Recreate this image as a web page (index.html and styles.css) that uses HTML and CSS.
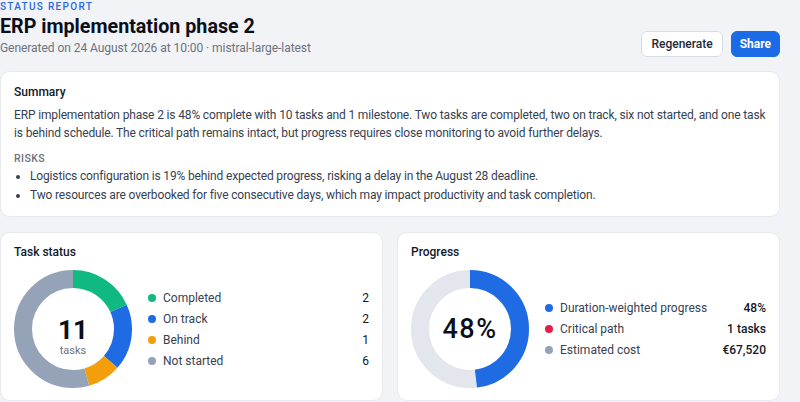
FILE: index.html
```html
<!DOCTYPE html>
<html lang="en">
<head>
    <meta charset="UTF-8">
    <meta name="viewport" content="width=device-width, initial-scale=1.0">
    <title>Status report - ERP implementation phase 2</title>
    <link rel="stylesheet" href="styles.css">
</head>
<body>
    <div class="page">
        <header class="report-header">
            <div>
                <div class="eyebrow">Status report</div>
                <h1>ERP implementation phase 2</h1>
                <div class="meta">Generated on 24 August 2026 at 10:00 · mistral-large-latest</div>
            </div>
            <div class="actions">
                <button class="btn">Regenerate</button>
                <button class="btn btn-primary">Share</button>
            </div>
        </header>

        <section class="card summary">
            <h2>Summary</h2>
            <p>ERP implementation phase 2 is 48% complete with 10 tasks and 1 milestone. Two tasks are completed, two on track, six not started, and one task is behind schedule. The critical path remains intact, but progress requires close monitoring to avoid further delays.</p>
            <div class="label">Risks</div>
            <ul>
                <li>Logistics configuration is 19% behind expected progress, risking a delay in the August 28 deadline.</li>
                <li>Two resources are overbooked for five consecutive days, which may impact productivity and task completion.</li>
            </ul>
        </section>

        <div class="grid">
            <section class="card chart-card">
                <h2>Task status</h2>
                <div class="chart-row">
                    <div class="donut">
                        <svg width="118" height="118" viewBox="0 0 118 118">
                            <g transform="rotate(-90 59 59)" fill="none" stroke-width="18">
                                <circle cx="59" cy="59" r="50" stroke="#10b981" stroke-dasharray="57.12 314.16" stroke-dashoffset="0"></circle>
                                <circle cx="59" cy="59" r="50" stroke="#1f6be4" stroke-dasharray="57.12 314.16" stroke-dashoffset="-57.12"></circle>
                                <circle cx="59" cy="59" r="50" stroke="#f59e0b" stroke-dasharray="28.56 314.16" stroke-dashoffset="-114.24"></circle>
                                <circle cx="59" cy="59" r="50" stroke="#94a3b8" stroke-dasharray="171.36 314.16" stroke-dashoffset="-142.80"></circle>
                            </g>
                        </svg>
                        <div class="donut-center">
                            <div class="big">11</div>
                            <div class="small">tasks</div>
                        </div>
                    </div>
                    <ul class="legend">
                        <li><span class="dot green"></span><span class="name">Completed</span><span class="val">2</span></li>
                        <li><span class="dot blue"></span><span class="name">On track</span><span class="val">2</span></li>
                        <li><span class="dot orange"></span><span class="name">Behind</span><span class="val">1</span></li>
                        <li><span class="dot gray"></span><span class="name">Not started</span><span class="val">6</span></li>
                    </ul>
                </div>
            </section>

            <section class="card chart-card">
                <h2>Progress</h2>
                <div class="chart-row">
                    <div class="donut">
                        <svg width="118" height="118" viewBox="0 0 118 118">
                            <g transform="rotate(-90 59 59)" fill="none" stroke-width="18">
                                <circle cx="59" cy="59" r="50" stroke="#e3e7ed"></circle>
                                <circle cx="59" cy="59" r="50" stroke="#1f6be4" stroke-dasharray="150.80 314.16"></circle>
                            </g>
                        </svg>
                        <div class="donut-center">
                            <div class="pct">48%</div>
                        </div>
                    </div>
                    <ul class="legend">
                        <li><span class="dot blue"></span><span class="name">Duration-weighted progress</span><span class="val strong">48%</span></li>
                        <li><span class="dot red"></span><span class="name">Critical path</span><span class="val strong">1 tasks</span></li>
                        <li><span class="dot gray"></span><span class="name">Estimated cost</span><span class="val strong">€67,520</span></li>
                    </ul>
                </div>
            </section>
        </div>
    </div>
</body>
</html>
```

FILE: styles.css
```css
body {
    margin: 0;
    background: #f1f3f7;
    font-family: Roboto, "Noto Sans", sans-serif;
    color: #1f2937;
}
.page {
    width: 780px;
}
.report-header {
    display: flex;
    justify-content: space-between;
    align-items: flex-end;
}
.eyebrow {
    font-size: 10px;
    line-height: 14px;
    font-weight: 500;
    letter-spacing: 1.3px;
    text-transform: uppercase;
    color: #2a6ae4;
}
h1 {
    margin: 2px 0 0;
    font-size: 19.7px;
    line-height: 22px;
    font-weight: 700;
    color: #0b0f19;
}
.meta {
    font-size: 12px;
    line-height: 16px;
    color: #6b7280;
    margin-top: 2px;
    letter-spacing: -0.05px;
}
.actions {
    display: flex;
    gap: 8px;
    margin-bottom: -1px;
}
.btn {
    font-family: inherit;
    font-size: 12px;
    font-weight: 500;
    height: 26px;
    padding: 0 9px;
    border: 1px solid #d8dde4;
    border-radius: 6px;
    background: #fff;
    color: #1f2937;
}
.btn-primary {
    padding: 0 8px;
    background: #1c6be6;
    border-color: #1c6be6;
    color: #fff;
    font-weight: 700;
}
.card {
    background: #fff;
    border: 1px solid #e6e9ee;
    border-radius: 10px;
    box-sizing: border-box;
}
.card h2 {
    margin: 0;
    font-size: 12px;
    line-height: 16px;
    font-weight: 500;
    color: #111827;
}
.summary {
    margin-top: 15px;
    padding: 12px 13px 11px;
}
.summary p {
    margin: 6px 0 0;
    font-size: 12px;
    line-height: 18px;
    letter-spacing: -0.15px;
    color: #374151;
}
.label {
    margin-top: 10px;
    font-size: 10.5px;
    line-height: 14px;
    letter-spacing: 0.04em;
    text-transform: uppercase;
    color: #6b7280;
    font-weight: 500;
}
.summary ul {
    margin: 1px 0 0;
    padding-left: 16px;
    font-size: 12px;
    line-height: 19px;
    letter-spacing: -0.15px;
    color: #374151;
}
.grid {
    display: grid;
    grid-template-columns: 1fr 1fr;
    gap: 14px;
    margin-top: 15px;
}
.chart-card {
    height: 169px;
    padding: 11px 13px 12px;
}
.chart-row {
    display: flex;
    align-items: center;
    gap: 16px;
    margin-top: 10px;
}
.donut {
    position: relative;
    width: 118px;
    height: 118px;
    flex: none;
}
.donut svg {
    display: block;
}
.donut-center {
    position: absolute;
    inset: 0;
    display: flex;
    flex-direction: column;
    align-items: center;
    justify-content: center;
}
.big {
    margin-top: 14px;
    font-size: 26px;
    line-height: 29px;
    font-weight: 700;
    color: #0b0f19;
}
.small {
    font-size: 11px;
    line-height: 11px;
    color: #6b7280;
}
.pct {
    font-size: 27px;
    line-height: 28px;
    font-weight: 500;
    letter-spacing: 1.5px;
    color: #0b0f19;
}
.legend {
    flex: 1;
    list-style: none;
    margin: 0;
    padding: 0;
    font-size: 12px;
}
.legend li {
    display: flex;
    align-items: center;
    height: 21px;
}
.legend .name {
    flex: 1;
    color: #374151;
}
.legend .val {
    color: #111827;
}
.legend .strong {
    font-weight: 500;
}
.dot {
    width: 8px;
    height: 8px;
    border-radius: 50%;
    margin-right: 7px;
}
.green { background: #10b981; }
.blue { background: #1f6be4; }
.orange { background: #f59e0b; }
.gray { background: #94a3b8; }
.red { background: #e11d48; }
```
